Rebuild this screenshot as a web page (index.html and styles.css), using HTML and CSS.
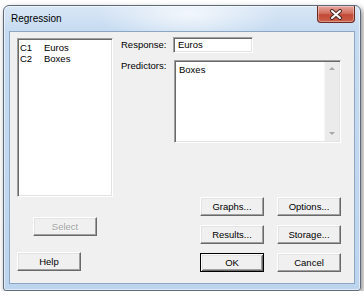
FILE: index.html
```html
<!DOCTYPE html>
<html>
<head>
<meta charset="utf-8">
<link rel="stylesheet" href="styles.css">
</head>
<body>
<div class="window">
  <div class="titlebar">
    <span class="title">Regression</span>
    <div class="close">
      <svg width="14" height="11" viewBox="0 0 14 11">
        <path d="M3 2 L11 9 M11 2 L3 9" stroke="#4a2a26" stroke-width="4" stroke-linecap="round"/>
        <path d="M3 2 L11 9 M11 2 L3 9" stroke="#ffffff" stroke-width="2" stroke-linecap="round"/>
      </svg>
    </div>
  </div>
  <div class="client">
    <div class="left">
      <div class="listbox">
        <div class="item"><span class="col">C1</span>Euros</div>
        <div class="item"><span class="col">C2</span>Boxes</div>
      </div>
      <div class="btn disabled select">Select</div>
      <div class="btn help">Help</div>
    </div>
    <div class="right">
      <div class="row">
        <span class="label">Response:</span>
        <div class="field">Euros</div>
      </div>
      <div class="row row2">
        <span class="label">Predictors:</span>
        <div class="area">
          <div class="area-text">Boxes</div>
          <div class="vscroll">
            <span class="arrow up"></span>
            <span class="arrow down"></span>
          </div>
        </div>
      </div>
      <div class="btngrid">
        <div class="btn">Graphs...</div>
        <div class="btn">Options...</div>
        <div class="btn">Results...</div>
        <div class="btn">Storage...</div>
        <div class="btn default">OK</div>
        <div class="btn">Cancel</div>
      </div>
    </div>
  </div>
</div>
</body>
</html>
```

FILE: styles.css
```css
html, body {
  margin: 0;
  background: #ffffff;
}
body {
  font-family: "Liberation Sans", Arial, sans-serif;
  font-size: 9.5px;
  color: #000;
}
.window {
  margin: 5px 0 0 3px;
  width: 358px;
  height: 286px;
  box-sizing: border-box;
  border: 1px solid #5d6a78;
  border-radius: 6px 6px 3px 3px;
  padding: 0 5px 6px 5px;
  display: flex;
  flex-direction: column;
  background:
    radial-gradient(ellipse 90px 30px at 185px 8px, rgba(255,255,255,0.7), rgba(255,255,255,0) 100%),
    linear-gradient(to bottom, #d9e7f6 0, #c6dbf1 25px, #bcd4ee 100%);
  box-shadow: 2px 3px 6px rgba(0,0,0,0.45), inset 0 0 0 1px rgba(255,255,255,0.55);
}
.titlebar {
  height: 25px;
  display: flex;
  justify-content: space-between;
  align-items: flex-start;
}
.title {
  margin-left: 2px;
  padding-top: 7px;
  line-height: 12px;
  font-size: 10px;
  color: #000;
}
.close {
  width: 38px;
  height: 17px;
  box-sizing: border-box;
  margin-top: 0;
  border: 1px solid #6b2a22;
  border-top: 0;
  border-radius: 0 0 4px 4px;
  background: linear-gradient(to bottom, #e6a79c 0, #d2705f 45%, #c34a36 55%, #c9604a 100%);
  box-shadow: inset 0 0 0 1px rgba(255,255,255,0.35);
  display: flex;
  align-items: center;
  justify-content: center;
}
.client {
  flex: 1;
  background: #f0f0f0;
  border: 1px solid #8da6c1;
  padding: 5px 0 0 7px;
  display: flex;
}
.left {
  width: 96px;
  display: flex;
  flex-direction: column;
}
.listbox {
  margin-top: 1px;
  height: 159px;
  box-sizing: border-box;
  background: #fff;
  border: 1px solid;
  border-color: #a0a0a0 #ffffff #ffffff #a0a0a0;
  box-shadow: inset 1px 1px 0 #696969, inset -1px -1px 0 #e3e3e3;
  padding: 3px 0 0 2px;
}
.item {
  line-height: 11px;
  height: 11px;
  white-space: nowrap;
}
.col {
  display: inline-block;
  width: 24px;
}
.btn {
  width: 64px;
  height: 19px;
  box-sizing: border-box;
  background: #f0f0f0;
  border: 1px solid;
  border-color: #ffffff #696969 #696969 #ffffff;
  box-shadow: inset -1px -1px 0 #a0a0a0, inset 1px 1px 0 #e3e3e3;
  display: flex;
  align-items: center;
  justify-content: center;
  white-space: nowrap;
}
.btn.default {
  border-color: #000;
  box-shadow: inset 1px 1px 0 #fff, inset -1px -1px 0 #696969, inset 2px 2px 0 #e3e3e3, inset -2px -2px 0 #a0a0a0;
}
.btn.disabled {
  color: #a0a0a0;
  text-shadow: 1px 1px 0 #fff;
}
.select {
  margin: 20px 0 0 16px;
}
.help {
  margin-top: 16px;
}
.right {
  margin-left: 8px;
  width: 220px;
  display: flex;
  flex-direction: column;
}
.row {
  display: flex;
  align-items: flex-start;
}
.label {
  width: 52px;
  line-height: 16px;
}
.row2 {
  margin-top: 7px;
}
.row2 .label {
  line-height: 12px;
  padding-top: 0;
}
.field {
  width: 80px;
  height: 16px;
  box-sizing: border-box;
  background: #fff;
  border: 1px solid;
  border-color: #a0a0a0 #ffffff #ffffff #a0a0a0;
  box-shadow: inset 1px 1px 0 #696969, inset -1px -1px 0 #e3e3e3;
  padding-left: 4px;
  line-height: 14px;
}
.area {
  margin-left: 1px;
  width: 167px;
  height: 83px;
  box-sizing: border-box;
  background: #fff;
  border: 1px solid;
  border-color: #a0a0a0 #ffffff #ffffff #a0a0a0;
  box-shadow: inset 1px 1px 0 #696969, inset -1px -1px 0 #e3e3e3;
  display: flex;
  padding: 1px 1px 1px 1px;
}
.area-text {
  flex: 1;
  padding: 2px 0 0 3px;
  line-height: 11px;
}
.vscroll {
  width: 14px;
  background: #ebebeb;
  border-left: 1px solid #f6f6f6;
  display: flex;
  flex-direction: column;
  justify-content: space-between;
  align-items: center;
  padding: 5px 0 6px 0;
}
.arrow {
  width: 0;
  height: 0;
  border-left: 3px solid transparent;
  border-right: 3px solid transparent;
}
.arrow.up {
  border-bottom: 3px solid #a8a8a8;
}
.arrow.down {
  border-top: 3px solid #a8a8a8;
}
.btngrid {
  margin-top: 54px;
  display: grid;
  grid-template-columns: 64px 64px;
  column-gap: 13px;
  row-gap: 9px;
  justify-content: end;
}
```
